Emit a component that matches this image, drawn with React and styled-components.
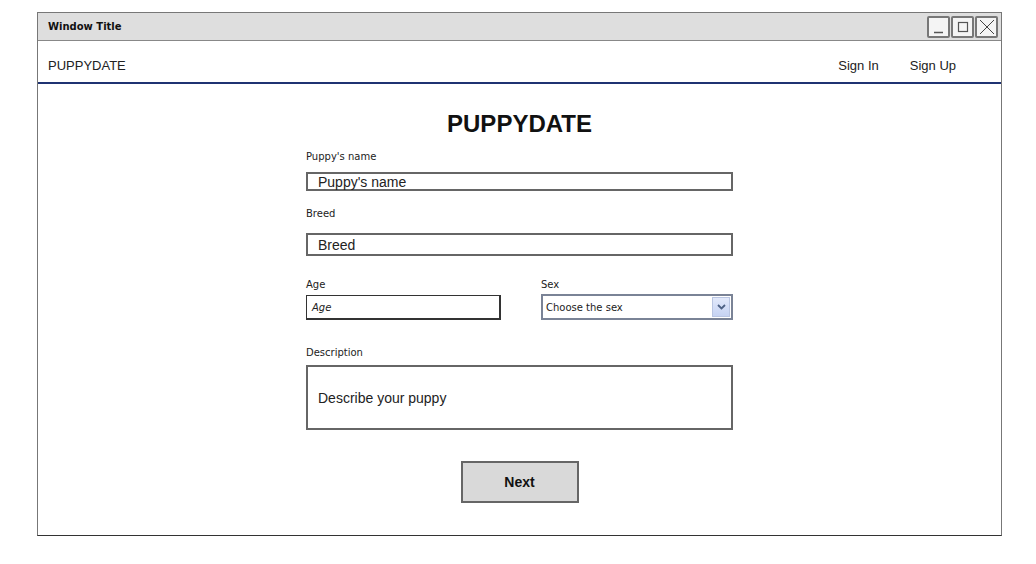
import React from "react";
import styled, { createGlobalStyle } from "styled-components";

const GlobalStyle = createGlobalStyle`
  body {
    margin: 0;
    background: #ffffff;
    font-family: "Liberation Sans", Arial, sans-serif;
  }
`;

const COLOR_BORDER = "#666666";
const COLOR_NAVY = "#1f3372";
const HAND_FONT = `"DejaVu Sans", "Liberation Sans", sans-serif`;

const Window = styled.div`
  margin: 12px 0 0 37px;
  width: 963px;
  height: 522px;
  border: 1px solid #777777;
  border-bottom-color: #333333;
  display: flex;
  flex-direction: column;
  box-sizing: content-box;
`;

const TitleBar = styled.div`
  height: 27px;
  background: #dedede;
  border-bottom: 1px solid #888888;
  display: flex;
  align-items: center;
  justify-content: space-between;
  padding: 0 3px 0 10px;
`;

const TitleText = styled.span`
  font-family: ${HAND_FONT};
  font-weight: bold;
  font-size: 10px;
  color: #111111;
`;

const Controls = styled.div`
  display: flex;
  gap: 1px;
`;

const ControlBox = styled.div`
  width: 19px;
  height: 18px;
  border: 2px solid #777777;
  border-radius: 2px;
  background: #f4f4f4;
  display: flex;
  align-items: center;
  justify-content: center;
`;

const NavBar = styled.div`
  height: 33px;
  border-bottom: 2px solid ${COLOR_NAVY};
  display: flex;
  align-items: center;
  justify-content: space-between;
  padding: 8px 45px 0 10px;
  font-size: 13px;
  color: #222222;
`;

const NavLinks = styled.div`
  display: flex;
  gap: 31px;
`;

const Content = styled.div`
  flex: 1;
  display: flex;
  flex-direction: column;
  align-items: center;
  padding-top: 26px;
`;

const Heading = styled.h1`
  margin: 0;
  font-size: 24px;
  line-height: 28px;
  font-weight: bold;
  color: #111111;
`;

const Form = styled.div`
  width: 427px;
  display: flex;
  flex-direction: column;
`;

const Label = styled.div`
  font-family: ${HAND_FONT};
  font-size: 10px;
  line-height: 14px;
  color: #222222;
  margin-top: ${(p) => p.$top}px;
  margin-bottom: ${(p) => p.$bottom}px;
`;

const TextBox = styled.div`
  height: ${(p) => p.$height}px;
  border: 2px solid ${COLOR_BORDER};
  box-sizing: border-box;
  display: flex;
  align-items: center;
  padding-left: 10px;
  font-size: 14px;
  color: #222222;
`;

const Row = styled.div`
  display: flex;
  justify-content: space-between;
  margin-top: 22px;
`;

const Column = styled.div`
  width: ${(p) => p.$width}px;
  display: flex;
  flex-direction: column;
`;

const SmallInput = styled.div`
  height: 25px;
  border: 1px solid #333333;
  border-right-width: 2px;
  border-bottom-width: 2px;
  box-sizing: border-box;
  display: flex;
  align-items: center;
  padding-left: 5px;
  font-family: ${HAND_FONT};
  font-style: italic;
  font-size: 10px;
  color: #222222;
`;

const Select = styled.div`
  height: 26px;
  border: 2px solid #7a8396;
  box-sizing: border-box;
  display: flex;
  align-items: center;
  justify-content: space-between;
  padding: 0 1px 0 3px;
  font-family: ${HAND_FONT};
  font-size: 10px;
  color: #222222;
`;

const SelectArrow = styled.div`
  width: 18px;
  height: 20px;
  background: linear-gradient(#e2e9fb, #c6d3f3);
  border: 1px solid #b9c5e2;
  box-sizing: border-box;
  display: flex;
  align-items: center;
  justify-content: center;
`;

const Button = styled.div`
  align-self: center;
  margin-top: 31px;
  width: 118px;
  height: 42px;
  box-sizing: border-box;
  background: #d9d9d9;
  border: 2px solid ${COLOR_BORDER};
  display: flex;
  align-items: center;
  justify-content: center;
  font-weight: bold;
  font-size: 14px;
  color: #111111;
`;

const App = () => {
  return (
    <>
      <GlobalStyle />
      <Window>
        <TitleBar>
          <TitleText>Window Title</TitleText>
          <Controls>
            <ControlBox>
              <svg width="14" height="14" viewBox="0 0 14 14">
                <line x1="2" y1="12.5" x2="11" y2="12.5" stroke="#555" strokeWidth="1.5" />
              </svg>
            </ControlBox>
            <ControlBox>
              <svg width="14" height="14" viewBox="0 0 14 14">
                <rect x="2.5" y="2.5" width="9" height="9" fill="none" stroke="#555" strokeWidth="1.2" />
              </svg>
            </ControlBox>
            <ControlBox>
              <svg width="16" height="16" viewBox="0 0 16 16">
                <path d="M1 1 L15 15 M15 1 L1 15" stroke="#444" strokeWidth="1" />
              </svg>
            </ControlBox>
          </Controls>
        </TitleBar>
        <NavBar>
          <span>PUPPYDATE</span>
          <NavLinks>
            <span>Sign In</span>
            <span>Sign Up</span>
          </NavLinks>
        </NavBar>
        <Content>
          <Heading>PUPPYDATE</Heading>
          <Form>
            <Label $top={12} $bottom={8}>Puppy's name</Label>
            <TextBox $height={19}>Puppy's name</TextBox>
            <Label $top={16} $bottom={12}>Breed</Label>
            <TextBox $height={23}>Breed</TextBox>
            <Row>
              <Column $width={195}>
                <Label $top={0} $bottom={3}>Age</Label>
                <SmallInput>Age</SmallInput>
              </Column>
              <Column $width={192}>
                <Label $top={0} $bottom={2}>Sex</Label>
                <Select>
                  <span>Choose the sex</span>
                  <SelectArrow>
                    <svg width="9" height="6" viewBox="0 0 9 6">
                      <path d="M1 1 L4.5 4.5 L8 1" fill="none" stroke="#4d6185" strokeWidth="1.8" />
                    </svg>
                  </SelectArrow>
                </Select>
              </Column>
            </Row>
            <Label $top={26} $bottom={5}>Description</Label>
            <TextBox $height={65}>Describe your puppy</TextBox>
            <Button>Next</Button>
          </Form>
        </Content>
      </Window>
    </>
  );
};

export default App;
